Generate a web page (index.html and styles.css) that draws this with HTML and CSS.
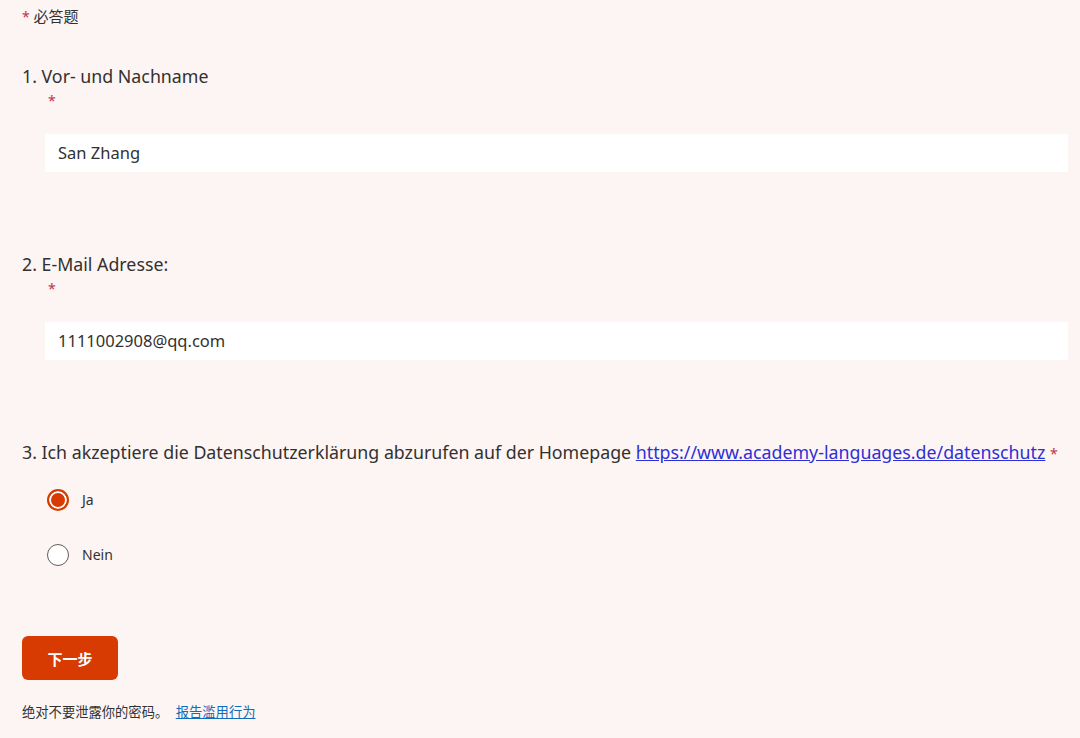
FILE: index.html
```html
<!DOCTYPE html>
<html lang="zh-CN">
<head>
  <meta charset="UTF-8">
  <title>Form</title>
  <link rel="stylesheet" href="styles.css">
</head>
<body>
  <div class="form">
    <div class="required-note"><span class="star">*</span> 必答题</div>

    <div class="question">
      <div class="q-title">1. Vor- und Nachname</div>
      <div class="q-star">*</div>
      <div class="answer">San Zhang</div>
    </div>

    <div class="question">
      <div class="q-title">2. E-Mail Adresse:</div>
      <div class="q-star">*</div>
      <div class="answer">1111002908@qq.com</div>
    </div>

    <div class="question q-choice">
      <div class="q-title">3. Ich akzeptiere die Datenschutzerklärung abzurufen auf der Homepage <a href="#">https://www.academy-languages.de/datenschutz</a> <span class="star">*</span></div>
      <div class="options">
        <label class="option"><span class="radio checked"></span>Ja</label>
        <label class="option"><span class="radio"></span>Nein</label>
      </div>
    </div>

    <button class="next-btn">下一步</button>

    <div class="footer-note">绝对不要泄露你的密码。 <a href="#">报告滥用行为</a></div>
  </div>
</body>
</html>
```

FILE: styles.css
```css
body {
  margin: 0;
  background: #fdf5f3;
  color: #323130;
  font-family: "Noto Sans", "Noto Sans CJK SC", sans-serif;
}
.form {
  padding: 6px 12px 0 22px;
}
.star {
  color: #c4314b;
  font-size: 14px;
  line-height: 1;
}
.required-note {
  font-size: 15px;
  line-height: 20px;
}
.question {
  margin-top: 38px;
  padding-bottom: 40px;
}
.question + .question {
  margin-top: 40px;
}
.q-title {
  font-size: 17.8px;
  line-height: 24px;
}
.q-title a {
  color: #2f2fd6;
}
.q-star {
  color: #c4314b;
  font-size: 14px;
  line-height: 20px;
  margin: 3px 0 0 26px;
}
.answer {
  margin: 23px 0 0 23px;
  background: #fff;
  height: 38px;
  line-height: 38px;
  padding: 0 13px;
  font-size: 16.5px;
}
.q-choice .options {
  display: flex;
  flex-direction: column;
  gap: 31px;
  margin-top: 24px;
  margin-left: 25px;
}
.option {
  display: flex;
  align-items: center;
  gap: 13px;
  font-size: 14px;
  line-height: 24px;
}
.radio {
  width: 22px;
  height: 22px;
  border: 1.5px solid #605e5c;
  border-radius: 50%;
  background: #fff;
  box-sizing: border-box;
}
.radio.checked {
  border: 2px solid #d83b01;
  box-shadow: inset 0 0 0 2px #fff;
  background: #d83b01;
}
.next-btn {
  display: block;
  width: 96px;
  height: 44px;
  margin-top: 29px;
  border: none;
  border-radius: 6px;
  background: #d83b01;
  color: #fff;
  font-family: "Noto Sans CJK SC", sans-serif;
  font-size: 15px;
  font-weight: bold;
}
.footer-note {
  margin-top: 23px;
  font-size: 13.3px;
  line-height: 18px;
}
.footer-note a {
  color: #0f6cbd;
  margin-left: 4px;
}
```
